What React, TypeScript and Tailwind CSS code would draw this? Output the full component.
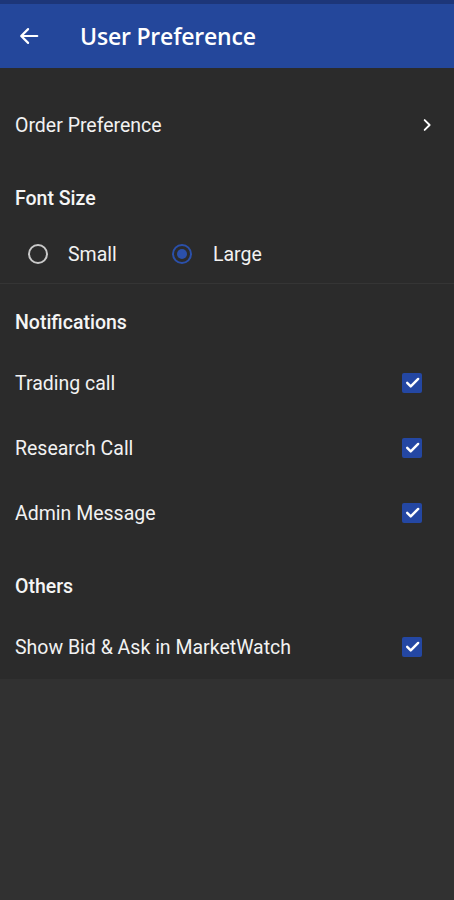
import React from "react";

function Check() {
  return (
    <div className="w-[20px] h-[20px] rounded-[2px] bg-[#2447a3] flex items-center justify-center">
      <svg width="17" height="17" viewBox="0 0 24 24" fill="none">
        <path d="M4.5 12.5l5 5L20 7" stroke="#ffffff" strokeWidth="3.4" strokeLinecap="round" strokeLinejoin="round" />
      </svg>
    </div>
  );
}

function CheckRow({ label }: { label: string }) {
  return (
    <div className="h-[65px] flex items-center justify-between pl-[15px] pr-[32px]">
      <span className="text-[19.5px] text-[#f2f2f2] pt-[2px]">{label}</span>
      <Check />
    </div>
  );
}

export default function App() {
  return (
    <div
      className="w-[454px] h-[900px] bg-[#313131] flex flex-col"
      style={{ fontFamily: "Roboto, 'Noto Sans', sans-serif" }}
    >
      <div className="h-[4px] bg-[#1d3679]" />
      <div className="h-[64px] bg-[#24479b] flex items-center">
        <div className="w-[80px] pl-[18px] flex items-center">
          <svg width="22" height="22" viewBox="0 0 24 24" fill="none">
            <path d="M21 12H4M11 4.5L3.5 12l7.5 7.5" stroke="#ffffff" strokeWidth="2.4" strokeLinecap="round" strokeLinejoin="round" />
          </svg>
        </div>
        <span
          className="text-[23px] font-semibold text-white tracking-[-0.2px] pt-[1px]"
          style={{ fontFamily: "'Open Sans', 'Noto Sans', sans-serif" }}
        >
          User Preference
        </span>
      </div>
      <div className="bg-[#2b2b2b]">
        <div className="h-[114px] flex items-center justify-between pl-[15px] pr-[20px]">
          <span className="text-[19.5px] text-[#f2f2f2] pt-[2px]">Order Preference</span>
          <svg width="14" height="14" viewBox="0 0 24 24" fill="none">
            <path d="M8 3.5L16.5 12 8 20.5" stroke="#ffffff" strokeWidth="3.2" strokeLinecap="round" strokeLinejoin="round" />
          </svg>
        </div>
        <div className="h-[32px] flex items-center pl-[15px]">
          <span className="text-[19.5px] font-medium text-[#f5f5f5] pt-[2px]">Font Size</span>
        </div>
        <div className="h-[69px] pt-[11px] flex items-center pl-[28px]">
          <div className="flex items-center w-[144px]">
            <div className="w-[20px] h-[20px] rounded-full border-[2px] border-[#c9c9c9]" />
            <span className="ml-[20px] text-[19.5px] text-[#f2f2f2] pt-[2px]">Small</span>
          </div>
          <div className="flex items-center">
            <div className="w-[20px] h-[20px] rounded-full border-[2px] border-[#2b50aa] flex items-center justify-center">
              <div className="w-[10px] h-[10px] rounded-full bg-[#2b50aa]" />
            </div>
            <span className="ml-[21px] text-[19.5px] text-[#f2f2f2] pt-[2px]">Large</span>
          </div>
        </div>
        <div className="h-[1px] bg-[#353535]" />
        <div className="h-[66px] pt-[10px] flex items-center pl-[15px]">
          <span className="text-[19.5px] font-medium text-[#f5f5f5] pt-[2px]">Notifications</span>
        </div>
        <CheckRow label="Trading call" />
        <CheckRow label="Research Call" />
        <CheckRow label="Admin Message" />
        <div className="h-[69px] pt-[13px] flex items-center pl-[15px]">
          <span className="text-[19.5px] font-medium text-[#f5f5f5] pt-[2px]">Others</span>
        </div>
        <CheckRow label="Show Bid & Ask in MarketWatch" />
      </div>
    </div>
  );
}
